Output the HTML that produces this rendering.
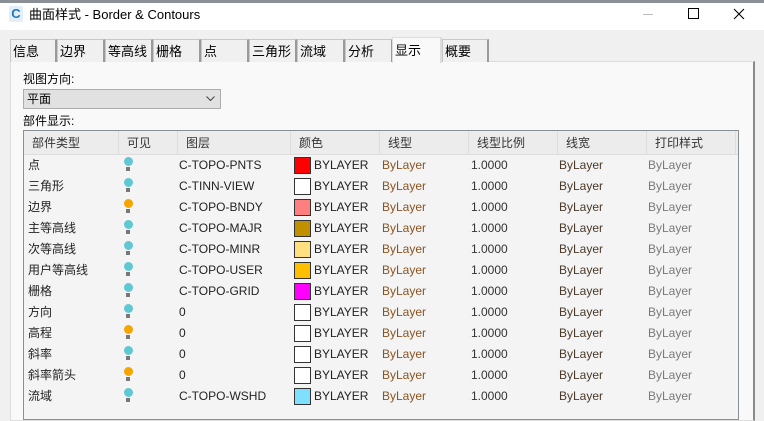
<!DOCTYPE html><html><head><meta charset="utf-8"><style>
*{margin:0;padding:0;box-sizing:border-box}
body{width:764px;height:415px;overflow:hidden;background:#f0f0f0;font-family:"Liberation Sans","Noto Sans CJK SC",sans-serif;font-size:12px;color:#000;position:relative;line-height:15px}
.a{position:absolute}
.tab{position:absolute;top:39px;height:23px;border:1px solid #c8c8c8;border-right:2px solid #9a9a9a;border-bottom:none;background:#f0f0f0;padding:3px 0 0 2px;font-size:13px;line-height:17px}
.row{position:absolute;left:24px;width:714px;height:21px;font-size:12px}
.row span{position:absolute;top:3px;white-space:nowrap;line-height:15px}
.b{position:absolute;left:100px;top:2px;width:9px;height:9px;border-radius:50%}
.s{position:absolute;left:102px;top:12px;width:4px;height:4px;background:#777}
.sw{position:absolute;left:270px;top:2px;width:17px;height:17px;border:1px solid #333}
.h{position:absolute;top:131px;height:24px;border-right:1px solid #ddd;color:#333;padding:5px 0 0 8px;font-size:12px;line-height:15px}
</style></head><body>
<div class="a" style="left:0;top:0;width:764px;height:3px;background:#8a8f96"></div>
<div class="a" style="left:0;top:3px;width:764px;height:27px;background:#fff"></div>
<div class="a" style="left:9px;top:6px;width:14px;height:16px;background:#e4eef8;border-radius:2px;color:#1a79c4;font-weight:bold;font-size:13px;text-align:center;line-height:16px">C</div>
<div class="a" style="left:29px;top:7px;font-size:13px;line-height:16px">曲面样式 - Border &amp; Contours</div>
<div class="a" style="left:643px;top:14px;width:10px;height:1px;background:#bbb"></div>
<div class="a" style="left:688px;top:8px;width:11px;height:11px;border:1px solid #000"></div>
<svg class="a" style="left:733px;top:8px" width="12" height="12"><path d="M1 1L11 11M11 1L1 11" stroke="#000" stroke-width="1.1"/></svg>
<div class="a" style="left:10px;top:61px;width:745px;height:360px;background:#f9f9f9;border:1px solid #ddd;border-right:2px solid #8a8a8a"></div>
<div class="tab" style="left:10px;width:47px">信息</div>
<div class="tab" style="left:57px;width:48px">边界</div>
<div class="tab" style="left:105px;width:48px">等高线</div>
<div class="tab" style="left:153px;width:48px">栅格</div>
<div class="tab" style="left:201px;width:48px">点</div>
<div class="tab" style="left:249px;width:48px">三角形</div>
<div class="tab" style="left:297px;width:48px">流域</div>
<div class="tab" style="left:345px;width:48px">分析</div>
<div class="tab" style="left:392px;top:37px;height:26px;width:50px;background:#f9f9f9;border-color:#ddd;padding-top:4px">显示</div>
<div class="tab" style="left:442px;width:47px">概要</div>
<div class="a" style="left:23px;top:72px">视图方向:</div>
<div class="a" style="left:23px;top:89px;width:198px;height:20px;background:#e1e1e1;border:1px solid #adadad;padding:2px 0 0 3px">平面<svg style="position:absolute;right:5px;top:6px" width="9" height="6"><path d="M0.5 0.5L4.5 4.5L8.5 0.5" stroke="#444" fill="none"/></svg></div>
<div class="a" style="left:23px;top:114px">部件显示:</div>
<div class="a" style="left:23px;top:130px;width:716px;height:290px;background:#f4f4f4;border:1px solid #8a8f96"></div>
<div class="a" style="left:24px;top:131px;width:714px;height:24px;background:#ececec;border-bottom:1px solid #ddd"></div>
<div class="h" style="left:24px;width:95px;padding-left:8px">部件类型</div>
<div class="h" style="left:119px;width:59px">可见</div>
<div class="h" style="left:178px;width:113px">图层</div>
<div class="h" style="left:291px;width:89px">颜色</div>
<div class="h" style="left:380px;width:89px">线型</div>
<div class="h" style="left:469px;width:89px">线型比例</div>
<div class="h" style="left:558px;width:89px">线宽</div>
<div class="h" style="left:647px;width:89px">打印样式</div>
<div id="rows"></div>
<script>
var d=[["点",0,"C-TOPO-PNTS","#ff0000"],["三角形",0,"C-TINN-VIEW","#fff"],["边界",1,"C-TOPO-BNDY","#ff7f7f"],["主等高线",0,"C-TOPO-MAJR","#c09000"],["次等高线",0,"C-TOPO-MINR","#ffdf7f"],["用户等高线",0,"C-TOPO-USER","#ffbf00"],["栅格",0,"C-TOPO-GRID","#ff00ff"],["方向",0,"0","#fff"],["高程",1,"0","#fff"],["斜率",0,"0","#fff"],["斜率箭头",1,"0","#fff"],["流域",0,"C-TOPO-WSHD","#7fdfff"]];
var h="";d.forEach(function(r,i){h+='<div class="row" style="top:'+(155+21*i)+'px"><span style="left:4px;color:#222">'+r[0]+'</span><div class="b" style="background:'+(r[1]?'#f5a500':'#5fc8d3')+'"></div><div class="s"></div><span style="left:155px;color:#222">'+r[2]+'</span><div class="sw" style="background:'+r[3]+'"></div><span style="left:290px;color:#222">BYLAYER</span><span style="left:358px;color:#8a5420">ByLayer</span><span style="left:447px;color:#333">1.0000</span><span style="left:535px;color:#4a3a2a">ByLayer</span><span style="left:624px;color:#7a7a7a">ByLayer</span></div>'});
document.getElementById("rows").innerHTML=h;
</script>
</body></html>
